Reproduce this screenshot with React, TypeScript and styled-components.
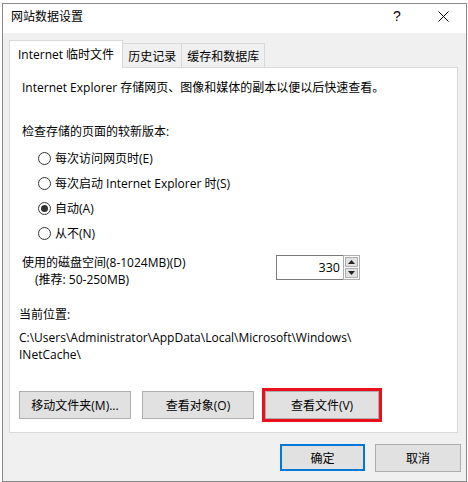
import React from "react";
import styled, { createGlobalStyle } from "styled-components";

const Global = createGlobalStyle`
  html, body {
    margin: 0;
    padding: 0;
    background: #ffffff;
  }
  body {
    font-family: "Open Sans", "Noto Sans CJK SC", sans-serif;
    font-size: 12px;
    color: #000;
  }
`;

const Window = styled.div`
  box-sizing: border-box;
  width: 465px;
  height: 479px;
  margin: 3px 0 0 2px;
  border: 1px solid #8a8a8a;
  background: #f0f0f0;
  display: flex;
  flex-direction: column;
`;

const TitleBar = styled.div`
  box-sizing: border-box;
  height: 29px;
  background: #fff;
  display: flex;
  align-items: center;
  padding: 0 0 5px 8px;
`;

const Title = styled.div`
  flex: 1;
  font-size: 12px;
`;

const CaptionButton = styled.div`
  width: 46px;
  height: 24px;
  display: flex;
  align-items: center;
  justify-content: center;
  font-size: 14px;
  font-family: "Liberation Sans", sans-serif;
`;

const Body = styled.div`
  flex: 1;
  display: flex;
  flex-direction: column;
  padding: 8px 0 0 6px;
`;

const TabRow = styled.div`
  display: flex;
  align-items: flex-end;
  height: 27px;
  position: relative;
  z-index: 1;
  margin-bottom: -1px;
`;

const Tab = styled.div<{ $active?: boolean }>`
  box-sizing: border-box;
  height: ${(p) => (p.$active ? 28 : 25)}px;
  padding: 0 ${(p) => (p.$active ? 8 : 5)}px;
  display: flex;
  align-items: center;
  padding-bottom: ${(p) => (p.$active ? 2 : 0)}px;
  border: 1px solid #d9d9d9;
  border-bottom: ${(p) => (p.$active ? "none" : "1px solid #d9d9d9")};
  border-left: ${(p) => (p.$active ? "1px solid #d9d9d9" : "none")};
  background: ${(p) => (p.$active ? "#fff" : "#f0f0f0")};
  white-space: nowrap;
`;

const Panel = styled.div`
  box-sizing: border-box;
  width: 449px;
  height: 366px;
  border: 1px solid #d9d9d9;
  background: #fff;
  padding: 11px 9px 0 9px;
  display: flex;
  flex-direction: column;
  line-height: 17px;
`;

const Text = styled.div<{ $indent?: number; $top?: number }>`
  padding-left: ${(p) => p.$indent ?? 3}px;
  margin-top: ${(p) => p.$top ?? 0}px;
  white-space: nowrap;
`;

const RadioGroup = styled.div`
  margin-top: 6px;
  padding-left: 19px;
  display: flex;
  flex-direction: column;
`;

const RadioRow = styled.div`
  height: 25px;
  display: flex;
  align-items: center;
  gap: 4px;
`;

const RadioCircle = styled.span<{ $checked?: boolean }>`
  box-sizing: border-box;
  width: 13px;
  height: 13px;
  border-radius: 50%;
  border: 1px solid #333;
  display: flex;
  align-items: center;
  justify-content: center;
  &::after {
    content: "";
    width: 7px;
    height: 7px;
    border-radius: 50%;
    background: ${(p) => (p.$checked ? "#333" : "transparent")};
  }
`;

const DiskRow = styled.div`
  margin-top: 8px;
  display: flex;
  align-items: flex-start;
`;

const DiskLabels = styled.div`
  width: 257px;
`;

const SpinBox = styled.div`
  display: flex;
  margin-top: 1px;
  height: 25px;
`;

const SpinField = styled.div`
  box-sizing: border-box;
  width: 67px;
  height: 25px;
  border: 1px solid #7a7a7a;
  border-right: none;
  display: flex;
  align-items: center;
  justify-content: flex-end;
  padding-right: 3px;
  font-size: 12.5px;
`;

const Spinner = styled.div`
  box-sizing: border-box;
  width: 17px;
  height: 25px;
  border: 1px solid #adadad;
  display: flex;
  flex-direction: column;
  gap: 1px;
  background: #fff;
  padding: 1px;
`;

const SpinArrow = styled.div`
  flex: 1;
  background: #e1e1e1;
  border: 1px solid #adadad;
  display: flex;
  align-items: center;
  justify-content: center;
`;

const ButtonRow = styled.div<{ $gap: number }>`
  display: flex;
  gap: ${(p) => p.$gap}px;
  margin-top: 28px;
`;

const Button = styled.div<{ $width: number; $default?: boolean; $marked?: boolean }>`
  box-sizing: border-box;
  width: ${(p) => p.$width}px;
  height: ${(p) => (p.$default ? 27 : 28)}px;
  background: #e1e1e1;
  border: ${(p) => (p.$default ? "2px solid #0078d7" : "1px solid #adadad")};
  display: flex;
  align-items: center;
  justify-content: center;
  white-space: nowrap;
  outline: ${(p) => (p.$marked ? "3px solid #e8111d" : "none")};
`;

const Footer = styled.div`
  display: flex;
  justify-content: flex-end;
  gap: 10px;
  margin-top: 11px;
  padding-right: 5px;
`;

const Close = () => (
  <svg width="11" height="11" viewBox="0 0 11 11">
    <path d="M0.5 0.5L10.5 10.5M10.5 0.5L0.5 10.5" stroke="#000" strokeWidth="1" />
  </svg>
);

const Arrow = ({ up }: { up?: boolean }) => (
  <svg width="7" height="4" viewBox="0 0 7 4">
    <path d={up ? "M0 4L3.5 0L7 4Z" : "M0 0L3.5 4L7 0Z"} fill="#222" />
  </svg>
);

const options = [
  { label: "每次访问网页时(E)" },
  { label: "每次启动 Internet Explorer 时(S)" },
  { label: "自动(A)", checked: true },
  { label: "从不(N)" },
];

export default function App() {
  return (
    <>
      <Global />
      <Window>
        <TitleBar>
          <Title>网站数据设置</Title>
          <CaptionButton>?</CaptionButton>
          <CaptionButton>
            <Close />
          </CaptionButton>
        </TitleBar>
        <Body>
          <TabRow>
            <Tab $active>Internet 临时文件</Tab>
            <Tab>历史记录</Tab>
            <Tab>缓存和数据库</Tab>
          </TabRow>
          <Panel>
            <Text>Internet Explorer 存储网页、图像和媒体的副本以便以后快速查看。</Text>
            <Text $top={27}>检查存储的页面的较新版本:</Text>
            <RadioGroup>
              {options.map((o) => (
                <RadioRow key={o.label}>
                  <RadioCircle $checked={o.checked} />
                  {o.label}
                </RadioRow>
              ))}
            </RadioGroup>
            <DiskRow>
              <DiskLabels>
                <Text>使用的磁盘空间(8-1024MB)(D)</Text>
                <Text $indent={16}>(推荐: 50-250MB)</Text>
              </DiskLabels>
              <SpinBox>
                <SpinField>330</SpinField>
                <Spinner>
                  <SpinArrow>
                    <Arrow up />
                  </SpinArrow>
                  <SpinArrow>
                    <Arrow />
                  </SpinArrow>
                </Spinner>
              </SpinBox>
            </DiskRow>
            <Text $indent={-1} $top={18}>当前位置:</Text>
            <Text $indent={-1} $top={6}>
              C:\Users\Administrator\AppData\Local\Microsoft\Windows\
            </Text>
            <Text $indent={-1}>INetCache\</Text>
            <ButtonRow $gap={11}>
              <Button $width={112}>移动文件夹(M)...</Button>
              <Button $width={112}>查看对象(O)</Button>
              <Button $width={114} $marked>查看文件(V)</Button>
            </ButtonRow>
          </Panel>
          <Footer>
            <Button $width={85} $default>确定</Button>
            <Button $width={86}>取消</Button>
          </Footer>
        </Body>
      </Window>
    </>
  );
}
